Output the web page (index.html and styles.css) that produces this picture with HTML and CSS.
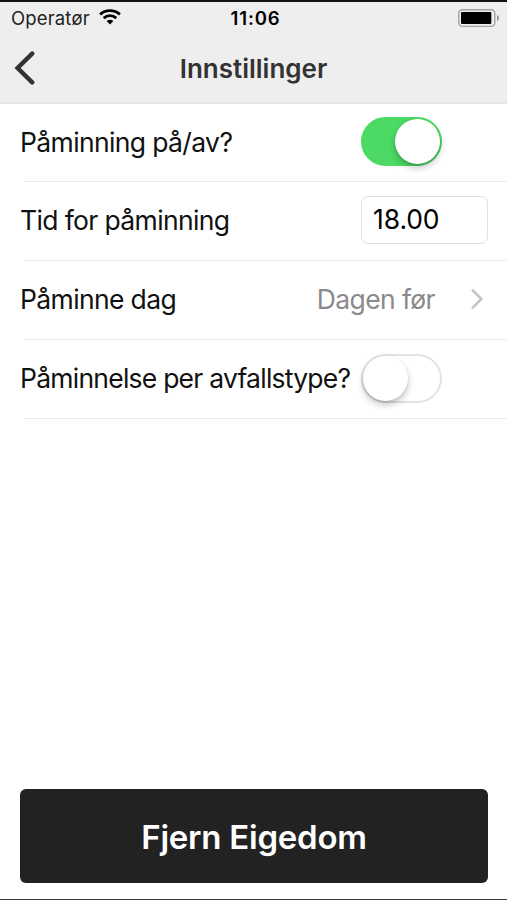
FILE: index.html
```html
<!DOCTYPE html>
<html lang="nn">
<head>
<meta charset="utf-8">
<title>Innstillinger</title>
<link rel="stylesheet" href="styles.css">
</head>
<body>
<div class="screen">
  <header class="header">
    <div class="status">
      <div class="carrier"><span class="carrier-name">Operatør</span>
        <svg class="wifi" width="22" height="16" viewBox="0 0 22 16" fill="none" stroke="#000" stroke-width="2.8"><path d="M1.1 5.4C6.8 .3 15.2 .3 20.9 5.4"/><path d="M4.7 9.1C8.3 5.9 13.7 5.9 17.3 9.1"/><path d="M11 15.4L7.6 12C9.6 10.3 12.4 10.3 14.4 12Z" fill="#000" stroke="none"/></svg>
      </div>
      <time class="clock">11:06</time>
      <svg class="battery" width="42" height="19" viewBox="0 0 42 19"><rect x=".8" y=".8" width="36" height="16.6" rx="3.6" fill="none" stroke="#a2a2a2" stroke-width="1.4"/><rect x="3" y="3" width="30.3" height="12" rx="1" fill="#000"/><path d="M39 6v6.2c2.6-1.4 2.6-4.8 0-6.2z" fill="#949494"/></svg>
    </div>
    <nav class="nav">
      <svg class="back" width="22" height="36" viewBox="0 0 22 36" fill="none" stroke="#333" stroke-width="4.4" stroke-linecap="round" stroke-linejoin="miter"><path d="M19.2 3.6L4.6 18L19.2 32.4"/></svg>
      <h1 class="title">Innstillinger</h1>
    </nav>
  </header>
  <main class="list">
    <div class="row"><span class="label">Påminning på/av?</span><div class="control"><span class="switch on"><span class="knob"></span></span></div></div>
    <div class="row"><span class="label">Tid for påminning</span><div class="control"><span class="time-field">18.00</span></div></div>
    <div class="row row-choice"><span class="label">Påminne dag</span><div class="choice"><span class="value">Dagen før</span><svg width="14" height="22" viewBox="0 0 14 22" fill="none" stroke="#c4c4c6" stroke-width="2.5"><path d="M2 1.6L11.4 11L2 20.4"/></svg></div></div>
    <div class="row"><span class="label label-long">Påminnelse per avfallstype?</span><div class="control"><span class="switch"><span class="knob"></span></span></div></div>
  </main>
  <footer class="footer"><button class="remove" type="button">Fjern Eigedom</button></footer>
</div>
</body>
</html>
```
FILE: styles.css
```css
* { box-sizing: border-box; }
body {
  margin: 0;
  background: #fff;
  color: #111;
  font-family: Inter, "Liberation Sans", sans-serif;
}
.screen {
  height: 900px;
  display: flex;
  flex-direction: column;
  border-top: 2px solid #151214;
  border-bottom: 1px solid #3c3c3e;
  overflow: hidden;
}
.header {
  height: 102px;
  background: #eee;
  border-bottom: 2px solid #e6e6e6;
}
.status {
  height: 32px;
  display: grid;
  grid-template-columns: 1fr auto 1fr;
  align-items: center;
  padding: 0 7px 0 11px;
}
.carrier { display: flex; align-items: center; gap: 9px; color: #222; }
.carrier-name { font-size: 18.5px; letter-spacing: .15px; }
.wifi { margin-top: -2px; }
.clock { font-size: 18.5px; font-weight: 600; letter-spacing: .9px; color: #000; }
.battery { justify-self: end; }
.nav {
  height: 68px;
  display: grid;
  grid-template-columns: 22px 1fr 22px;
  align-items: center;
  padding: 0 13px;
}
.title {
  margin: 0;
  text-align: center;
  font-size: 26px;
  font-weight: 600;
  letter-spacing: 0;
  color: #333;
}
.row {
  height: 79px;
  margin-left: 24px;
  padding-bottom: 2px;
  display: grid;
  grid-template-columns: 337px 1fr;
  align-items: center;
  border-bottom: 1px solid #ebebeb;
  font-size: 26.5px;
}
.row:first-child { height: 78px; }
.row-choice { grid-template-columns: auto 1fr; }
.label { margin-left: -4px; white-space: nowrap; letter-spacing: -.63px; }
.label-long { letter-spacing: -.76px; }
.control { display: flex; }
.switch {
  width: 81px;
  height: 49px;
  border-radius: 25px;
  border: 2px solid #e3e3e3;
  display: flex;
}
.knob {
  width: 45px;
  height: 45px;
  border-radius: 50%;
  background: #fff;
  box-shadow: 0 4px 7px rgba(0, 0, 0, .22), 0 1px 2px rgba(0, 0, 0, .12);
}
.on { background: #4cd964; border-color: #4cd964; justify-content: flex-end; }
.time-field {
  width: 127px;
  height: 48px;
  padding: 0 0 2px 11px;
  display: flex;
  align-items: center;
  border: 1px solid #e0e0e0;
  border-radius: 7px;
  color: #000;
  letter-spacing: -.1px;
}
.choice {
  justify-self: end;
  display: flex;
  align-items: center;
  gap: 35px;
  padding-right: 23px;
  white-space: nowrap;
  color: #8a8a8c;
}
.value { letter-spacing: -.6px; }
.footer { margin-top: auto; padding: 0 19px 16px 20px; }
.remove {
  width: 100%;
  height: 94px;
  display: block;
  padding: 2px 0 0;
  border: 0;
  border-radius: 6px;
  background: #222;
  color: #fff;
  font: 600 33px Inter, "Liberation Sans", sans-serif;
  letter-spacing: -.25px;
}
```
